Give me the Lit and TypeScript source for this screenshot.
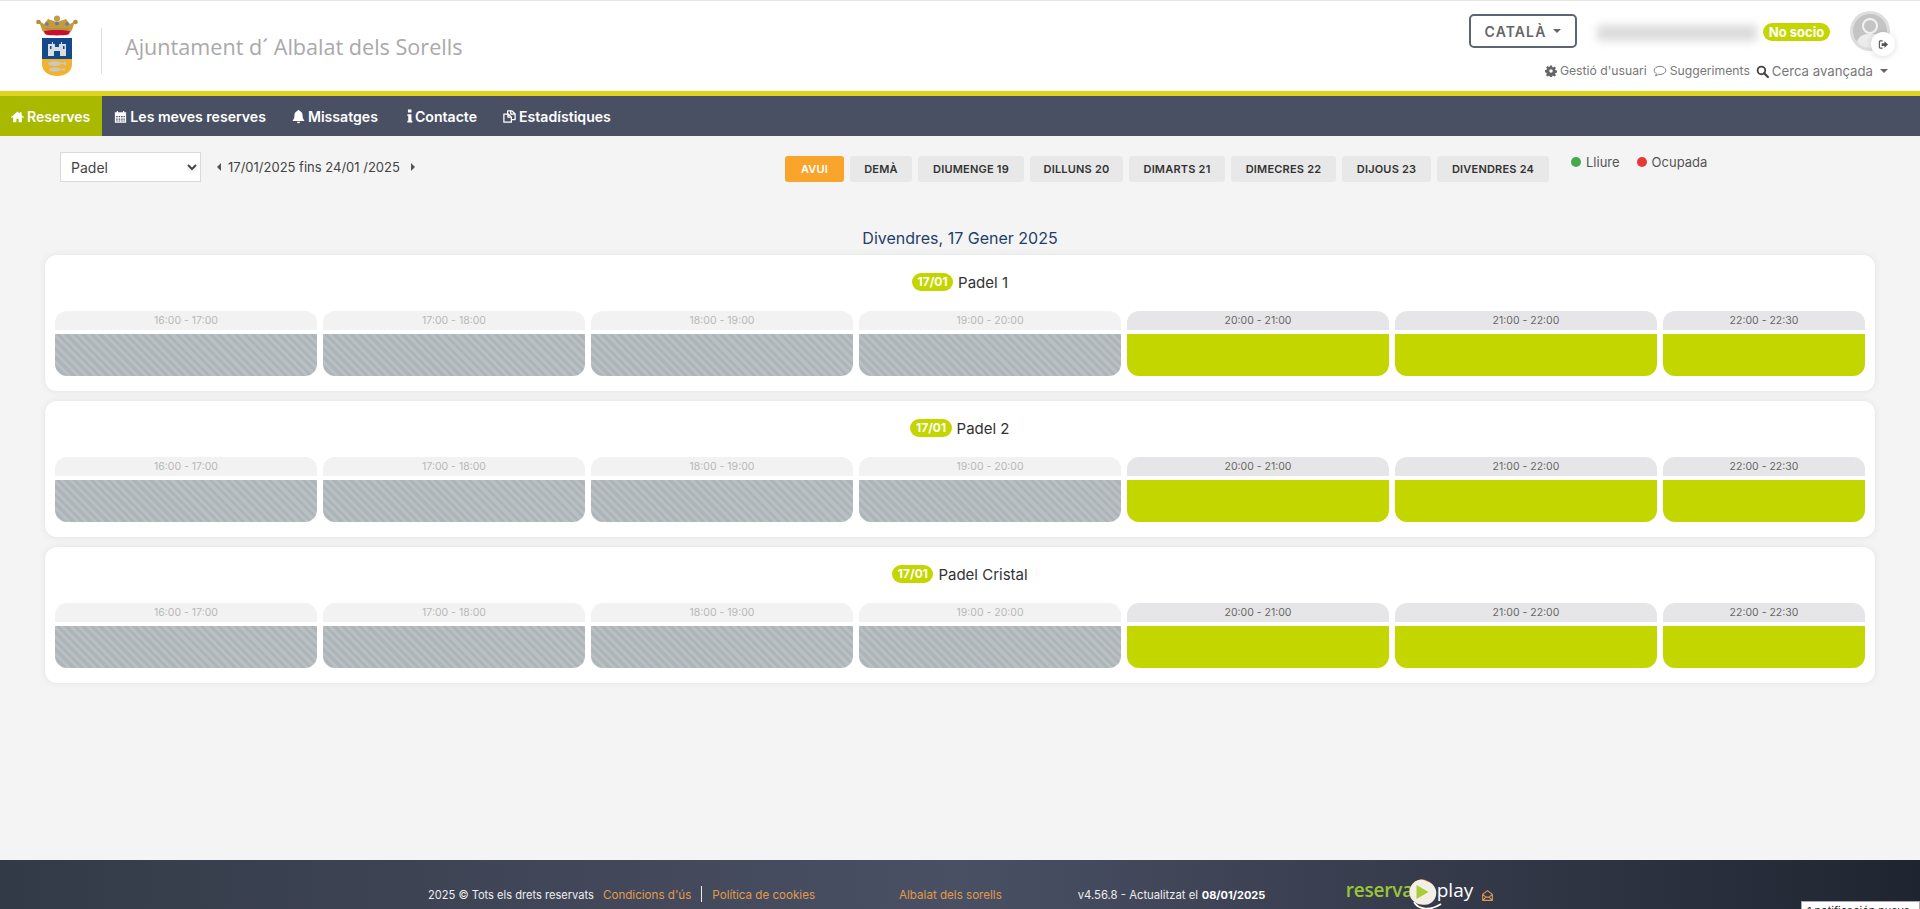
import { LitElement, html, css, svg } from "lit";
import { customElement } from "lit/decorators.js";

const ic = (p: unknown, cls = "ic") => html`<svg class=${cls} viewBox="0 0 24 24">${p}</svg>`;
const home = svg`<path fill="currentColor" d="M12 4 1.500 13.200l1.200 1.300L5 12.600V21h5.200v-5.600h3.600V21H19v-8.400l2.300 1.900 1.200-1.300L18.500 9.600V5h-3v2z"/>`;
const cal = svg`<path fill="currentColor" fill-rule="evenodd" d="M3 5h3V3h2v2h8V3h2v2h3v17H3zm2 6v2h2.500v-2zm4 0v2h2.500v-2zm4 0v2h2.500v-2zm3.800 0v2H19v-2zM5 15v2h2.500v-2zm4 0v2h2.500v-2zm4 0v2h2.500v-2zm3.800 0v2H19v-2zM5 18.500V20h2.500v-1.500zm4 0V20h2.500v-1.500zm4 0V20h2.500v-1.500zm3.800 0V20H19v-1.500z"/>`;
const bell = svg`<path fill="currentColor" d="M12 1.500a1.600 1.600 0 0 0-1.600 1.800C7.300 4 5.500 6.600 5.500 10c0 5-1.300 6.600-2.700 8v1.200h18.400V18c-1.400-1.400-2.700-3-2.700-8 0-3.400-1.800-6-4.900-6.700A1.600 1.600 0 0 0 12 1.500zM9.500 20.300a2.500 2.500 0 0 0 5 0z"/>`;
const info = svg`<path fill="currentColor" d="M1 1h6v5H1zM0 9h7v11h1.500v3H0v-3h1.500v-8H0z"/>`;
const copy = svg`<path fill="none" stroke="currentColor" stroke-width="2" stroke-linejoin="round" d="M9 8V3h7l5 5v9h-6M14 3v5h7M3 8h7l5 5v8H3zM9.500 8v5H15"/>`;
const gear = svg`<path fill="currentColor" fill-rule="evenodd" d="M10 1h4l.6 3.200 1.900.8 2.700-1.800 2.800 2.800-1.800 2.700.8 1.900 3.200.6v4l-3.200.6-.8 1.900 1.800 2.700-2.800 2.800-2.700-1.800-1.900.8-.6 3.200h-4l-.6-3.200-1.900-.8-2.700 1.800-2.800-2.800 1.800-2.700-.8-1.900L0 14v-4l3.200-.6.8-1.900L2.200 4.800 5 2l2.700 1.800 1.900-.8zM12 8.500a3.500 3.500 0 1 0 0 7 3.500 3.500 0 0 0 0-7z"/>`;
const bubble = svg`<path fill="none" stroke="currentColor" stroke-width="1.600" stroke-linejoin="round" d="M12 4C6.500 4 2 7.100 2 11c0 2.300 1.500 4.300 3.900 5.600-.2 1.400-1 2.600-1.900 3.400 2.200-.2 4.200-1 5.500-2.300.8.200 1.600.3 2.500.3 5.500 0 10-3.100 10-7s-4.500-7-10-7z"/>`;
const search = svg`<circle cx="10" cy="10" r="7" fill="none" stroke="currentColor" stroke-width="3.400"/><path d="M15 15l7 7" stroke="currentColor" stroke-width="4" stroke-linecap="round"/>`;
const signout = svg`<path fill="none" stroke="currentColor" stroke-width="2.400" d="M10 4H5a2 2 0 0 0-2 2v12a2 2 0 0 0 2 2h5"/><path fill="currentColor" d="M14 5l8 7-8 7v-4H8V9h6z"/>`;
const envelope = svg`<path fill="none" stroke="currentColor" stroke-width="2" stroke-linejoin="round" d="M3 10l9-7 9 7v11H3zM3 10l6 5h6l6-5M3 21l6-6M21 21l-6-6"/>`;

const crest = html`<svg class="crest" viewBox="0 0 42 62" aria-hidden="true">
  <path d="M3 6l5 3 4-5 9 3 9-3 4 5 5-3-3 9-3 4H9l-3-4z" fill="#c59a3c"/>
  <circle cx="21" cy="3.500" r="3" fill="#c89b3f"/><circle cx="2.500" cy="7" r="2.300" fill="#b58d3a"/><circle cx="39.500" cy="7" r="2.300" fill="#b58d3a"/>
  <circle cx="11" cy="9" r="1.800" fill="#5f7fa6"/><circle cx="21" cy="8.500" r="2" fill="#5f7fa6"/><circle cx="31" cy="9" r="1.800" fill="#5f7fa6"/>
  <path d="M9 13h24l-2 3H11z" fill="#b89243"/>
  <path d="M8 16c6-1.500 20-1.500 26 0l-1.500 3.500c-7 1.200-16 1.200-23 0z" fill="#c8102e"/>
  <path d="M6 23h30v21H6z" fill="#134a8e"/>
  <path d="M6 44h30v5c0 8-7 12-15 12S6 57 6 49z" fill="#f1b232"/>
  <path d="M12 29h4v-2h1v2h2v3h4v-3h2v-2h1v2h4v12H12z" fill="#d9dde0"/>
  <path d="M18 36h6v5h-6zM14 31h1.500v3H14zM27 31h1.500v3H27z" fill="#134a8e"/>
  <path d="M12 48c3-2.500 10-2.500 14 0l4-1.500v4l-4-1.500c-4 2.500-11 2.500-14 0z" fill="#c9c9c0"/>
  <path d="M13 54c3-2 8-2 12 0l4-1v3l-4-1c-4 2-9 2-12 0z" fill="#c9c9c0"/>
</svg>`;

interface Row { title: string; }
const rows: Row[] = [{ title: "Padel 1" }, { title: "Padel 2" }, { title: "Padel Cristal" }];
const slots = [
  ["16:00 - 17:00", false], ["17:00 - 18:00", false], ["18:00 - 19:00", false], ["19:00 - 20:00", false],
  ["20:00 - 21:00", true], ["21:00 - 22:00", true], ["22:00 - 22:30", true],
] as const;
const days = ["DEMÀ", "DIUMENGE 19", "DILLUNS 20", "DIMARTS 21", "DIMECRES 22", "DIJOUS 23", "DIVENDRES 24"];

@customElement("app-root")
export class AppRoot extends LitElement {
  static styles = css`
    :host { display: flex; flex-direction: column; height: 909px; overflow: hidden; position: relative;
      background: #f4f4f4; font-family: Inter, "Liberation Sans", sans-serif; color: #333; }
    .ic { width: 1em; height: 1em; flex: none; display: block; }
    header { height: 90px; flex: none; background: #fff; border-top: 1px solid #e6e6e6; display: flex; position: relative; }
    .logo { margin: 14px 0 0 36px; width: 42px; height: 62px; flex: none; }
    .crest { display: block; width: 42px; height: 62px; }
    .sep { width: 1px; height: 46px; background: #dedede; margin: 27px 0 0 23px; }
    .brand { font-family: "Open Sans", sans-serif; font-size: 21.600px; line-height: 32px; color: #a9a9a9; margin: 30px 0 0 23px; }
    .right { margin-left: auto; display: flex; flex-direction: column; align-items: flex-end; padding-right: 30px; }
    .top { display: flex; align-items: flex-start; }
    .lang { box-sizing: border-box; width: 108px; height: 34px; margin-top: 13px; border: 2px solid #5d6670; border-radius: 5px;
      display: flex; align-items: center; justify-content: center; gap: 7px; font-size: 14px; font-weight: 600; letter-spacing: 1.100px; color: #666; }
    .caret { width: 0; height: 0; border: 4px solid transparent; border-top-color: currentColor; border-bottom: 0; flex: none; }
    .blur { width: 160px; height: 16px; margin: 24px 0 0 20px; background: #dcdcdc; filter: blur(4px); }
    .badge { margin: 22px 0 0 6px; width: 67px; height: 18px; border-radius: 9px; background: #c4d600; color: #fff; font-size: 13px; font-weight: 700;
      line-height: 18px; text-align: center; }
    .avatar { position: relative; width: 40px; height: 40px; margin: 10px 0 0 20px; }
    .avatar > svg { display: block; width: 40px; height: 40px; }
    .out { position: absolute; right: -5px; bottom: -5px; width: 24px; height: 24px; border-radius: 50%; background: #fff; color: #555;
      box-shadow: 0 1px 6px rgba(0,0,0,.14); font-size: 11px; display: flex; align-items: center; justify-content: center; }
    .links { display: flex; align-items: center; margin: 11px 2px 0 0; font-size: 12.200px; color: #777; line-height: 18px; }
    .links span { display: flex; align-items: center; gap: 3px; }
    .links .l2 { margin-left: 6px; }
    .links .l2 .ic { font-size: 14px; }
    .links .l3 { margin-left: 6px; font-size: 13.200px; }
    .links .caret { margin-left: 7px; border-top-color: #666; }
    .links .q { color: #444; font-size: 13px; }
    .links .g { color: #666; font-size: 12px; }
    .strip { height: 5px; flex: none; background: #e0d51c; }
    nav { height: 40px; flex: none; background: #4a5064; display: flex; color: #fff; font-weight: 600; font-size: 14.100px; }
    nav a { display: flex; align-items: center; gap: 2px; padding: 0 14px 0 11px; }
    nav a .ic { font-size: 15px; }
    nav a .i6 { width: 6px; height: 14px; margin-left: 4px; }
    nav a.on { background: #a9b900; padding: 0 12px 0 10px; }
    main { flex: 1; min-height: 0; display: flex; flex-direction: column; }
    .tools { display: grid; grid-template-columns: 725px auto auto; justify-content: start; padding: 16px 0 0 60px; align-items: start; }
    .left { display: flex; align-items: center; }
    select { width: 141px; height: 30px; background: #fff; border: 1px solid #d9d9d9; color: #444; font: 14px Inter, sans-serif; padding-left: 6px; }
    .date { display: flex; align-items: center; gap: 7px; margin: 0 0 0 16px; font-size: 13px; color: #444; height: 28px; }
    .tri-l, .tri-r { width: 0; height: 0; border: 4px solid transparent; flex: none; }
    .tri-l { border-right-color: #555; border-left: 0; }
    .tri-r { border-left-color: #555; border-right: 0; margin-left: 4px; }
    .days { display: grid; grid-template-columns: 59px 62px 106px 93px 96px 105px 89px 112px; gap: 6px; margin-top: 4px; }
    .day { height: 26px; border-radius: 3px; background: #e8e8e8; color: #333; font-size: 11px; font-weight: 600; letter-spacing: .2px;
      display: flex; align-items: center; justify-content: center; white-space: nowrap; }
    .day.now { background: #f9a52b; color: #fff; }
    .legend { display: flex; gap: 17px; margin-left: 22px; height: 20px; font-size: 13px; color: #555; }
    .legend span { display: flex; align-items: center; gap: 5px; }
    .legend i { width: 10px; height: 10px; border-radius: 50%; display: block; }
    h2 { margin: 46px 0 7px; font-size: 16px; line-height: 20px; font-weight: 400; text-align: center; color: #1f3f6b; }
    .cards { display: flex; flex-direction: column; gap: 10px; padding: 0 45px; }
    .card { background: #fff; border-radius: 12px; box-shadow: 0 0 6px rgba(60,70,90,.1); padding: 0 10px 15px; }
    .title { height: 56px; box-sizing: border-box; padding-bottom: 2px; display: flex; align-items: center; justify-content: center; gap: 5px; font-size: 15px; color: #333; }
    .pill { background: #c4d600; color: #fff; font-size: 12px; font-weight: 700; height: 18px; line-height: 18px; padding: 0 5.500px; border-radius: 9px; }
    .slots { display: grid; grid-template-columns: repeat(6, 1fr) 202px; gap: 6px; }
    .hd { height: 19px; border-radius: 12px 12px 0 0; text-align: center; font-size: 10.500px; line-height: 19px; background: #f2f2f2; color: #b8b8b8; }
    .on .hd { background: #e6e6e8; color: #666; }
    .blk { height: 42px; margin-top: 4px; border-radius: 0 0 12px 12px;
      background: repeating-linear-gradient(45deg, #aeb5b9 0 3px, #b9bfc3 3px 6px); }
    .on .blk { background: #c4d600; }
    footer { height: 49px; flex: none; box-sizing: border-box; padding: 26px 0 0 428px; color: #eee; font-size: 11.600px; line-height: 18px; display: flex; align-items: flex-start;
      background: linear-gradient(90deg, #333a47 0%, #4a5064 50%, #1f2530 100%); white-space: nowrap; position: relative; }
    footer .t { width: 165px; font-size: 11.100px; flex: none; }
    footer .o { color: #e09a4c; flex: none; }
    footer .v { width: 118px; font-size: 11.300px; flex: none; margin-left: 76px; }
    footer .bar { width: 1px; height: 16px; background: #eee; margin: 0 10px; flex: none; }
    footer b { font-weight: 700; color: #fff; font-size: 11px; margin-left: 6px; width: 63px; flex: none; }
    .rp { margin: -26px 0 0 81px; width: 135px; position: relative; height: 49px; flex: none; }
    .rp .a { position: absolute; left: 0; top: 15px; font: 600 19px/30px "Open Sans", sans-serif; color: #9ac43a; letter-spacing: -.2px; }
    .rp .b { position: absolute; left: 91px; top: 15px; font: 400 19px/30px "Open Sans", sans-serif; color: #fff; }
    .rp svg { position: absolute; left: 60px; top: 18px; width: 36px; height: 31px; }
    .env { color: #e09a4c; font-size: 13px; margin-top: 3px; }
    .toast { position: absolute; right: 0; top: 41px; box-sizing: border-box; width: 119px; height: 24px; background: #fff; border: 1px solid #aaa;
      font-size: 11px; line-height: 16px; padding: 1px 5px; color: #333; white-space: nowrap; overflow: hidden; }
  `;

  render() {
    return html`
      <header>
        <div class="logo">${crest}</div>
        <div class="sep"></div>
        <div class="brand">Ajuntament d´ Albalat dels Sorells</div>
        <div class="right">
          <div class="top">
            <div class="lang">CATALÀ <i class="caret"></i></div>
            <div class="blur"></div>
            <div class="badge">No socio</div>
            <div class="avatar">
              <svg viewBox="0 0 40 40"><circle cx="20" cy="20" r="20" fill="#dedede"/><circle cx="20" cy="20" r="17" fill="#c4c4c4"/>
                <circle cx="20" cy="15" r="7" fill="#c4c4c4" stroke="#f2f2f2" stroke-width="2"/><path d="M7 31c2-7 7-8 13-8s11 1 13 8a17 17 0 0 1-26 0z" fill="#ececec"/></svg>
              <div class="out">${ic(signout)}</div>
            </div>
          </div>
          <div class="links">
            <span><span class="g">${ic(gear)}</span>Gestió d'usuari</span>
            <span class="l2">${ic(bubble)}Suggeriments</span>
            <span class="l3"><span class="q">${ic(search)}</span>Cerca avançada</span>
            <i class="caret"></i>
          </div>
        </div>
      </header>
      <div class="strip"></div>
      <nav>
        <a class="on">${ic(home)}Reserves</a>
        <a>${ic(cal)}Les meves reserves</a>
        <a>${ic(bell)}Missatges</a>
        <a><svg class="i6" viewBox="0 0 9 24">${info}</svg>Contacte</a>
        <a>${ic(copy)}Estadístiques</a>
      </nav>
      <main>
        <div class="tools">
          <div class="left">
            <select><option>Padel</option></select>
            <div class="date"><i class="tri-l"></i>17/01/2025 fins 24/01 /2025<i class="tri-r"></i></div>
          </div>
          <div class="days">
            <div class="day now">AVUI</div>
            ${days.map((d) => html`<div class="day">${d}</div>`)}
          </div>
          <div class="legend">
            <span><i style="background:#43a94a"></i>Lliure</span>
            <span><i style="background:#e53935"></i>Ocupada</span>
          </div>
        </div>
        <h2>Divendres, 17 Gener 2025</h2>
        <div class="cards">
          ${rows.map((r) => html`<section class="card">
            <div class="title"><span class="pill">17/01</span>${r.title}</div>
            <div class="slots">
              ${slots.map(([t, free]) => html`<div class=${free ? "on" : ""}><div class="hd">${t}</div><div class="blk"></div></div>`)}
            </div>
          </section>`)}
        </div>
      </main>
      <footer>
        <span class="t">2025 © Tots els drets reservats</span>
        <span class="o" style="margin-left:10px">Condicions d'ús</span>
        <span class="bar"></span>
        <span class="o">Política de cookies</span>
        <span class="o" style="margin-left:84px">Albalat dels sorells</span>
        <span class="v">v4.56.8 - Actualitzat el</span>
        <b>08/01/2025</b>
        <div class="rp">
          <span class="a">reserva</span>
          <svg viewBox="0 0 36 31"><path d="M8 24c5 8 16 9 27 2" fill="none" stroke="#fff" stroke-width="1.800"/><circle cx="16" cy="14" r="12.500" fill="#e8822f"/><path d="M16 1.500a12.500 12.500 0 0 0 0 25 10 10 0 0 0 5-23A12 12 0 0 0 16 1.500z" fill="#f4efe6"/><path d="M10.500 7l12 7-12 7z" fill="#a6cd3a"/></svg>
          <span class="b">play</span>
        </div>
        <span class="env">${ic(envelope)}</span>
        <div class="toast">1 notificación nueva</div>
      </footer>
    `;
  }
}
